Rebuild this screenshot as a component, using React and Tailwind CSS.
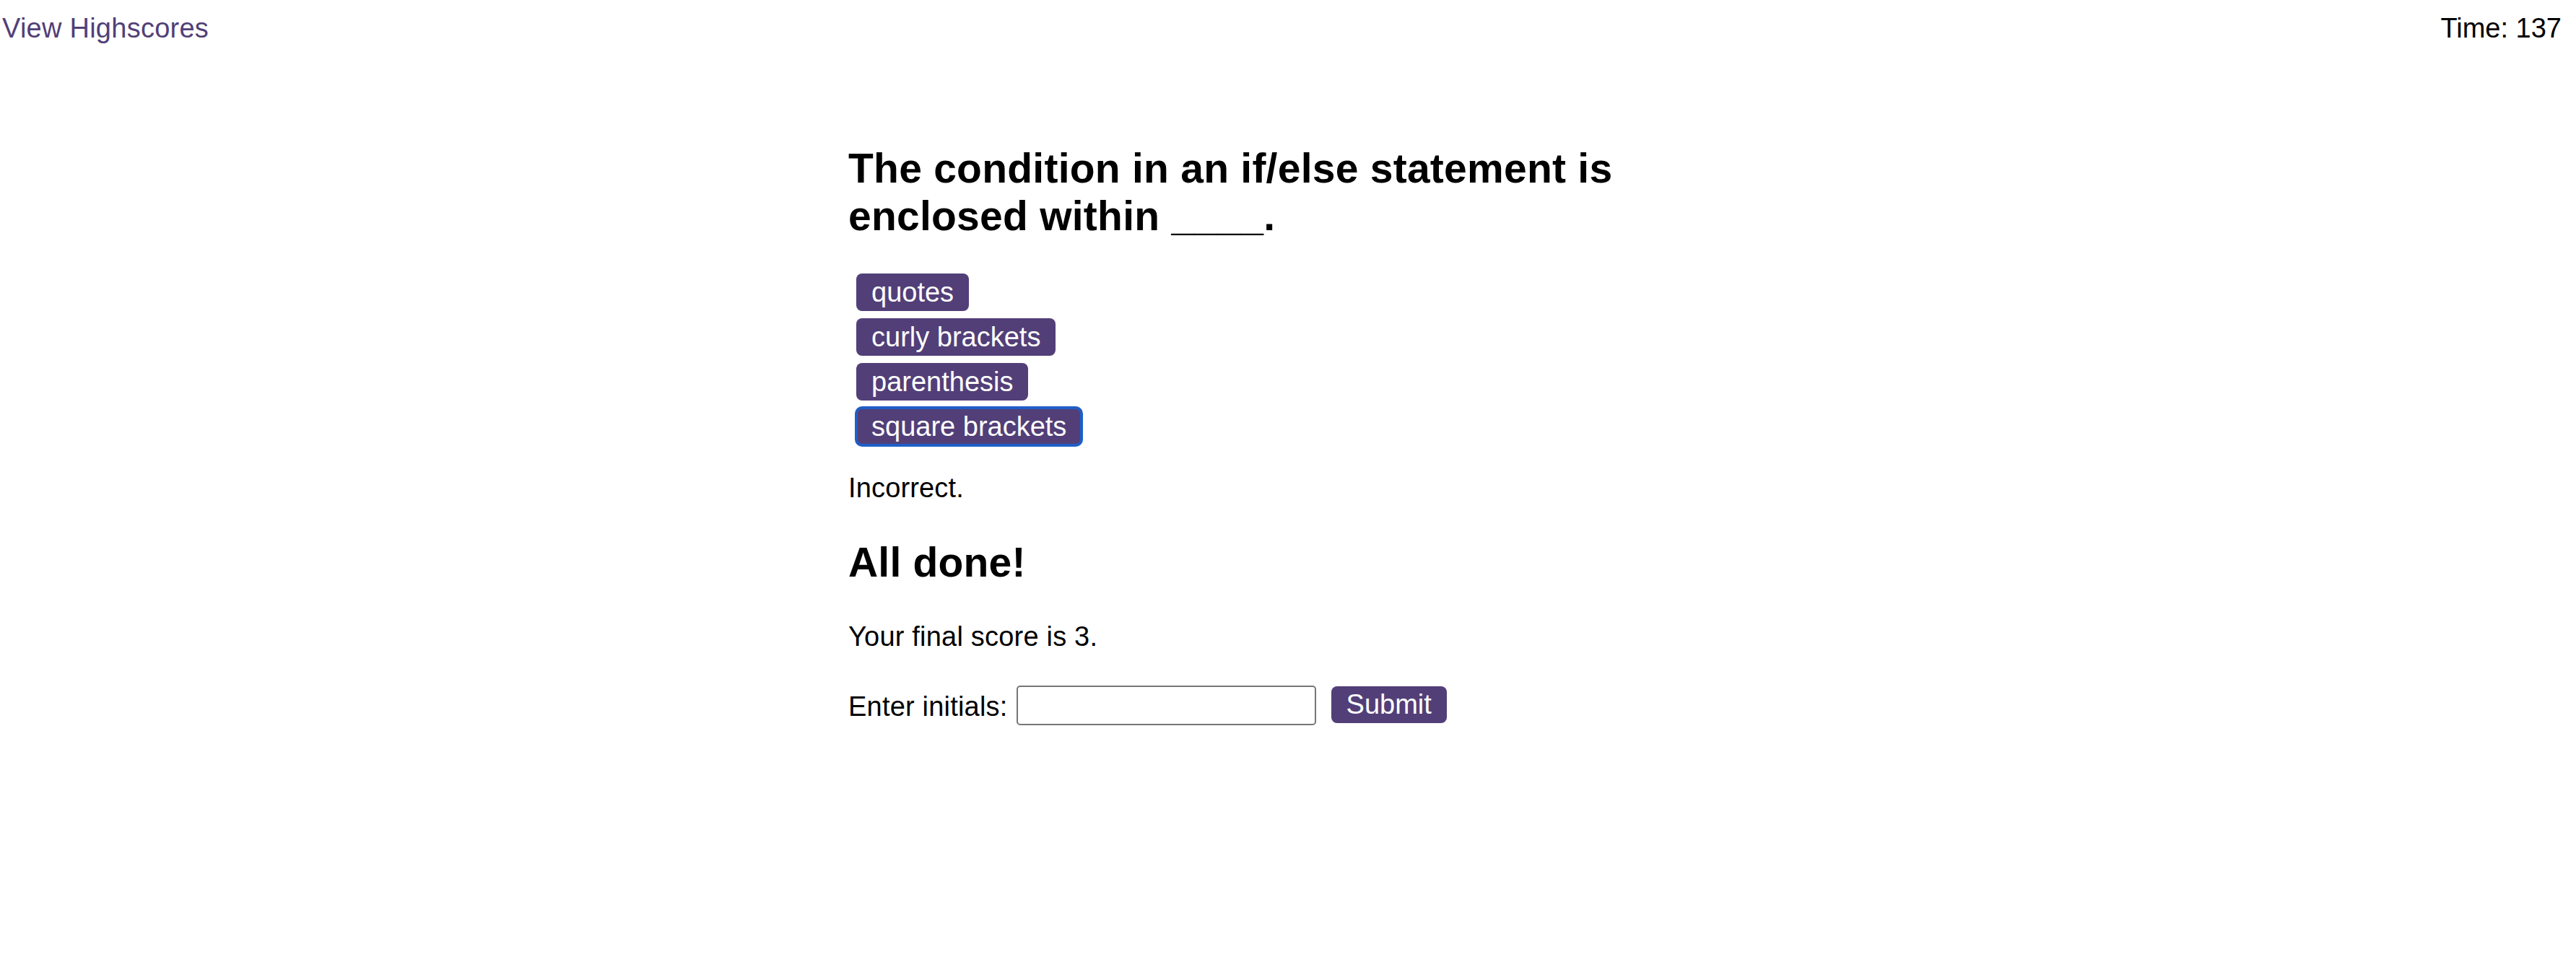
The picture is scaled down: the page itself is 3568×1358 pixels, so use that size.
import React from "react";

const options = ["quotes", "curly brackets", "parenthesis", "square brackets"];

export default function App() {
  return (
    <div className="min-h-screen bg-white text-black font-['Liberation_Sans',Arial,sans-serif]">
      <header className="flex justify-between pt-[17px] pl-[3px] pr-[20px] text-[38px] leading-[44px]">
        <a href="#" className="text-[#523f78] tracking-[0.25px]">View Highscores</a>
        <div>Time: 137</div>
      </header>
      <main className="w-[1218px] mx-auto">
        <h2 className="mt-[139px] text-[57px] leading-[66px] font-bold tracking-[0.25px]">
          The condition in an if/else statement is enclosed within ____.
        </h2>
        <div className="mt-[47px] flex flex-col items-start gap-[10px] pl-[11px]">
          {options.map((o, i) => (
            <button
              key={o}
              className={
                i === 3
                  ? "text-[38px] leading-[44px] px-[21px] py-[4px] rounded-[8px] bg-[#523f78] text-white shadow-[0_0_0_2px_#1f5fc8,inset_0_0_0_2px_#1f5fc8]"
                  : "text-[38px] leading-[44px] px-[21px] py-[4px] rounded-[8px] bg-[#523f78] text-white"
              }
            >
              {o}
            </button>
          ))}
        </div>
        <p className="mt-[37px] text-[38px] leading-[44px] tracking-[0.15px]">Incorrect.</p>
        <h2 className="mt-[48px] text-[57px] leading-[66px] font-bold tracking-[0.2px]">All done!</h2>
        <p className="mt-[48px] text-[38px] leading-[44px] tracking-[0.2px]">Your final score is 3.</p>
        <div className="mt-[46px] flex items-start">
          <label className="mt-[7px] text-[38px] leading-[44px] tracking-[0.2px]">Enter initials:</label>
          <input
            type="text"
            className="ml-[12px] w-[415px] h-[55px] border-2 border-[#767676] rounded-[5px] bg-white"
          />
          <button className="ml-[21px] mt-[1px] text-[38px] leading-[43px] px-[21px] py-[4px] rounded-[8px] bg-[#523f78] text-white">
            Submit
          </button>
        </div>
      </main>
    </div>
  );
}
